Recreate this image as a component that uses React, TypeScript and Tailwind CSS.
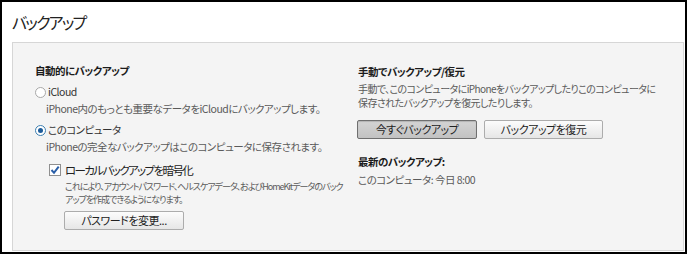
const jp = "[font-family:'Noto_Sans_CJK_JP','Noto_Sans',sans-serif] [font-feature-settings:'palt'] whitespace-nowrap";

const Radio = ({ checked }: { checked?: boolean }) => (
  <span
    className={`flex h-[11px] w-[11px] shrink-0 items-center justify-center rounded-full border bg-white ${
      checked ? "border-[#3c7fb1]" : "border-[#a8a8a8]"
    }`}
  >
    {checked && <span className="h-[5px] w-[5px] rounded-full bg-[#1e5c9a]" />}
  </span>
);

const Checkbox = () => (
  <span className="flex h-[12px] w-[12px] shrink-0 items-center justify-center border border-[#8f8f8f] bg-white">
    <svg width="10" height="10" viewBox="0 0 10 10">
      <path d="M1.5 5 L4 7.8 L8.7 1.6" fill="none" stroke="#2a5fa8" strokeWidth="2" />
    </svg>
  </span>
);

const Btn = ({ label, pressed, w }: { label: string; pressed?: boolean; w: string }) => (
  <button
    className={`flex h-[19px] items-center justify-center rounded-[2px] border text-[11px] tracking-[-0.5px] text-[#222] ${w} ${
      pressed
        ? "border-[#6f6f6f] bg-gradient-to-b from-[#d4d4d4] to-[#c2c2c2] shadow-[inset_0_1px_1px_rgba(0,0,0,0.15)]"
        : "border-[#acacac] bg-gradient-to-b from-[#fcfcfc] to-[#e6e6e6]"
    }`}
  >
    {label}
  </button>
);

export default function App() {
  return (
    <div className={`flex h-[254px] w-[687px] flex-col border-2 border-black bg-white ${jp}`}>
      <h1 className="pl-[10px] pt-[9px] text-[16px] leading-[22px] tracking-[-1.8px] text-[#222]">バックアップ</h1>

      <div className="ml-[10px] mr-px mt-[9px] mb-px flex flex-1 border border-[#d6d6d6] bg-[#f4f4f4] pl-[22px] pt-[20px]">
        {/* 自動 */}
        <div className="flex w-[322px] shrink-0 flex-col text-[10.5px] tracking-[-0.5px]">
          <div className="leading-[16px] font-bold text-[#1b1b1b]">自動的にバックアップ</div>

          <div className="mt-[5px] flex items-center gap-[2px] leading-[16px] text-[#333]">
            <Radio />
            <span>iCloud</span>
          </div>
          <div className="ml-[11px] mt-[1px] leading-[16px] text-[#5a5a5a]">
            iPhone内のもっとも重要なデータをiCloudにバックアップします。
          </div>

          <div className="mt-[5px] flex items-center gap-[2px] leading-[16px] text-[#333]">
            <Radio checked />
            <span>このコンピュータ</span>
          </div>
          <div className="ml-[11px] mt-[1px] leading-[16px] text-[#5a5a5a]">
            iPhoneの完全なバックアップはこのコンピュータに保存されます。
          </div>

          <div className="ml-[14px] mt-[6px] flex items-center gap-[4px] text-[11.5px] leading-[18px] tracking-[-1.6px] text-[#222]">
            <Checkbox />
            <span>ローカルバックアップを暗号化</span>
          </div>
          <div className="ml-[30px] mt-[1px] text-[9px] leading-[13px] tracking-[-1px] text-[#5a5a5a]">
            これにより、アカウントパスワード、ヘルスケアデータ、およびHomeKitデータのバック
            <br />
            アップを作成できるようになります。
          </div>
          <div className="ml-[29px] mt-[5px]">
            <Btn label="パスワードを変更..." w="w-[120px]" />
          </div>
        </div>

        {/* 手動 */}
        <div className="mt-px flex flex-col pl-px text-[10.5px] tracking-[-0.5px]">
          <div className="leading-[16px] font-bold text-[#1b1b1b]">手動でバックアップ/復元</div>
          <div className="mt-[2px] text-[10px] leading-[14px] tracking-[-0.6px] text-[#5a5a5a]">
            手動で、このコンピュータにiPhoneをバックアップしたりこのコンピュータに
            <br />
            保存されたバックアップを復元したりします。
          </div>
          <div className="-ml-px mt-[10px] flex gap-[7px]">
            <Btn label="今すぐバックアップ" pressed w="w-[120px]" />
            <Btn label="バックアップを復元" w="w-[119px]" />
          </div>
          <div className="mt-[15px] leading-[16px] font-bold text-[#1b1b1b]">最新のバックアップ:</div>
          <div className="mt-[2px] leading-[16px] text-[#5a5a5a]">このコンピュータ: 今日 8:00</div>
        </div>
      </div>
    </div>
  );
}
